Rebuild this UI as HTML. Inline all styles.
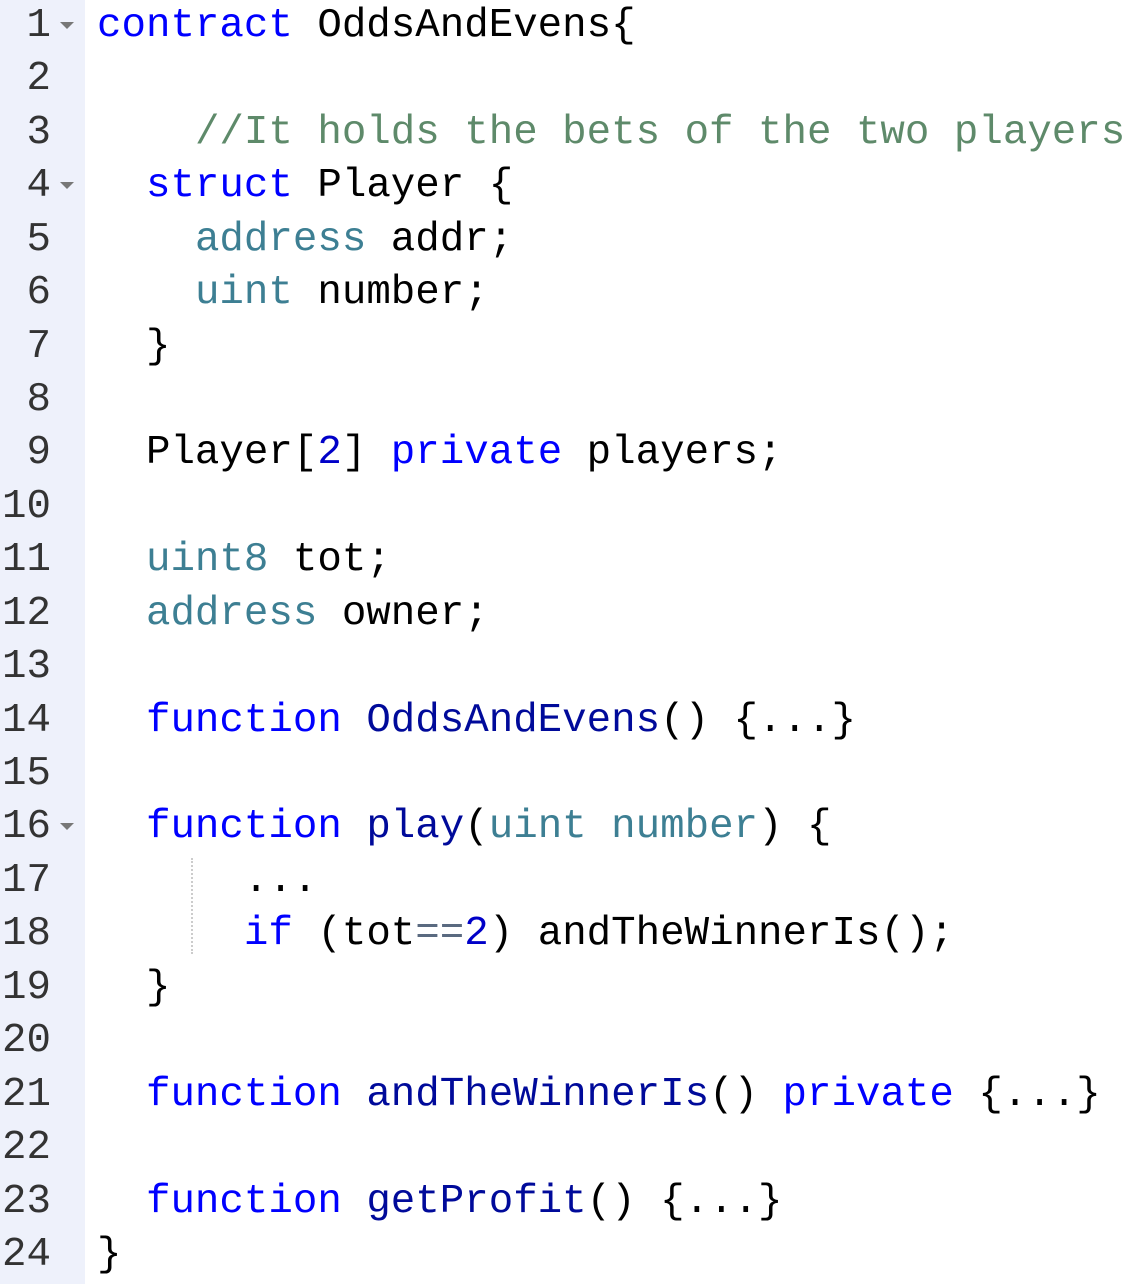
<!DOCTYPE html>
<html><head><meta charset="utf-8"><style>
html,body{margin:0;padding:0;background:#fff;width:1138px;height:1284px;overflow:hidden}
#g{position:absolute;left:0;top:0;width:85px;height:1284px;background:#eef1fb}
#w{position:absolute;left:0;top:2px;width:1138px;height:1284px}
.l{position:absolute;left:97px;height:54px;line-height:54px;font-family:"Liberation Mono",monospace;font-size:40.8px;white-space:pre;color:#000}
.n{position:absolute;left:0;width:51px;text-align:right;color:#333;font-family:"Liberation Mono",monospace;font-size:40.8px;line-height:54px;height:54px}
.f{position:absolute;left:60px;width:0;height:0;border-left:7px solid transparent;border-right:7px solid transparent;border-top:7px solid #777}
.k{color:#0000ff}.fn{color:#000a9a}.t{color:#3d7f93}.cm{color:#5e8a6a}.num{color:#0000c8}.op{color:#5a6a80}
.ig{position:absolute;left:191px;top:856px;height:96px;border-left:2px dotted #ccc}
</style></head><body>
<div id="g"></div>
<div id="w">
<div class="ig"></div>
<div class="n" style="top:-3px">1</div><div class="l" style="top:-3px"><span class="k">contract</span> OddsAndEvens{</div><div class="f" style="top:20px"></div>
<div class="n" style="top:50.4px">2</div>
<div class="n" style="top:103.9px">3</div><div class="l" style="top:103.9px">    <span class="cm">//It holds the bets of the two players</span></div>
<div class="n" style="top:157.3px">4</div><div class="l" style="top:157.3px">  <span class="k">struct</span> Player {</div><div class="f" style="top:180.3px"></div>
<div class="n" style="top:210.7px">5</div><div class="l" style="top:210.7px">    <span class="t">address</span> addr;</div>
<div class="n" style="top:264.2px">6</div><div class="l" style="top:264.2px">    <span class="t">uint</span> number;</div>
<div class="n" style="top:317.6px">7</div><div class="l" style="top:317.6px">  }</div>
<div class="n" style="top:371px">8</div>
<div class="n" style="top:424.4px">9</div><div class="l" style="top:424.4px">  Player[<span class="num">2</span>] <span class="k">private</span> players;</div>
<div class="n" style="top:477.9px">10</div>
<div class="n" style="top:531.3px">11</div><div class="l" style="top:531.3px">  <span class="t">uint8</span> tot;</div>
<div class="n" style="top:584.7px">12</div><div class="l" style="top:584.7px">  <span class="t">address</span> owner;</div>
<div class="n" style="top:638.2px">13</div>
<div class="n" style="top:691.6px">14</div><div class="l" style="top:691.6px">  <span class="k">function</span> <span class="fn">OddsAndEvens</span>() {...}</div>
<div class="n" style="top:745px">15</div>
<div class="n" style="top:798.4px">16</div><div class="l" style="top:798.4px">  <span class="k">function</span> <span class="fn">play</span>(<span class="t">uint number</span>) {</div><div class="f" style="top:821.4px"></div>
<div class="n" style="top:851.9px">17</div><div class="l" style="top:851.9px">      ...</div>
<div class="n" style="top:905.3px">18</div><div class="l" style="top:905.3px">      <span class="k">if</span> (tot<span class="op">==</span><span class="num">2</span>) andTheWinnerIs();</div>
<div class="n" style="top:958.7px">19</div><div class="l" style="top:958.7px">  }</div>
<div class="n" style="top:1012.2px">20</div>
<div class="n" style="top:1065.6px">21</div><div class="l" style="top:1065.6px">  <span class="k">function</span> <span class="fn">andTheWinnerIs</span>() <span class="k">private</span> {...}</div>
<div class="n" style="top:1119px">22</div>
<div class="n" style="top:1172.5px">23</div><div class="l" style="top:1172.5px">  <span class="k">function</span> <span class="fn">getProfit</span>() {...}</div>
<div class="n" style="top:1225.9px">24</div><div class="l" style="top:1225.9px">}</div>
</div>
</body></html>
